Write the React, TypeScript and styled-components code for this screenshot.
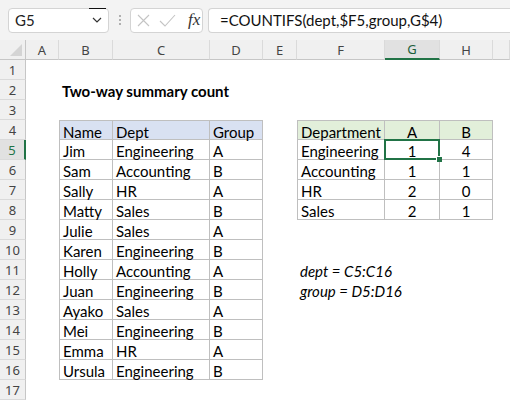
import styled, { createGlobalStyle, css } from "styled-components";

const GlobalStyle = createGlobalStyle`
    html, body {
        margin: 0;
        padding: 0;
        background: #ffffff;
    }
    body {
        width: 510px;
        height: 400px;
        overflow: hidden;
        font-family: "Noto Sans", "Open Sans", sans-serif;
    }
    * {
        box-sizing: border-box;
    }
`;

const Green = "#217346";
const TableLine = "#bfbfbf";

const Window = styled.div`
    width: 510px;
    height: 400px;
    overflow: hidden;
    display: flex;
    flex-direction: column;
    background: #ffffff;
`;

const FormulaBar = styled.div`
    height: 40px;
    flex: none;
    display: flex;
    align-items: center;
    padding-left: 8px;
    background: #f3f3f3;
    overflow: hidden;
`;

const Box = styled.div`
    height: 25px;
    display: flex;
    align-items: center;
    background: #ffffff;
    border: 1px solid #d4d4d4;
    border-radius: 4px;
    flex: none;
`;

const NameBox = styled(Box)`
    position: relative;
    width: 101px;
    padding: 0 6px 0 6px;
    justify-content: space-between;
    font-family: Lato, "Noto Sans", sans-serif;
    font-size: 15px;
    color: #222;

    &::before {
        content: "";
        position: absolute;
        top: -1px;
        right: 2px;
        width: 17px;
        height: 1px;
        background: #111;
    }
`;

const Dots = styled.div`
    width: 21px;
    flex: none;
    display: flex;
    flex-direction: column;
    align-items: center;
    gap: 2px;

    span {
        width: 2px;
        height: 2px;
        border-radius: 1px;
        background: #9a9a9a;
    }
`;

const FxBox = styled(Box)`
    width: 73px;
    padding-left: 6px;
    gap: 9px;
`;

const Fx = styled.span`
    margin-left: 3px;
    font-family: "Liberation Serif", serif;
    font-style: italic;
    font-size: 17px;
    color: #333;
`;

const FormulaBox = styled(Box)`
    margin-left: 5px;
    width: 320px;
    padding-left: 11px;
    border-right: none;
    border-radius: 4px 0 0 4px;
    font-family: Lato, "Noto Sans", sans-serif;
    font-size: 15px;
    color: #111;
    white-space: nowrap;
`;

const Sheet = styled.div`
    display: grid;
    grid-template-columns: 26px 33px 54px 97px 53px 34px 88px 55px 53px 1fr;
    grid-auto-rows: 20px;
    font-family: Lato, "Liberation Sans", sans-serif;
`;

const Corner = styled.div`
    background: #f0f0f0;
    border-right: 1px solid #c6c6c6;
    border-bottom: 1px solid #c6c6c6;
    display: flex;
    align-items: flex-end;
    justify-content: flex-end;
    padding: 0 3px 3px 0;
`;

const ColHead = styled.div<{ $active?: boolean }>`
    display: flex;
    align-items: center;
    justify-content: center;
    background: ${(p) => (p.$active ? "#e1e1e1" : "#f0f0f0")};
    border-right: 1px solid #dadada;
    border-bottom: ${(p) => (p.$active ? `2px solid ${Green}` : "1px solid #c6c6c6")};
    font-family: "Noto Sans", sans-serif;
    font-size: 13px;
    color: ${(p) => (p.$active ? "#1e5e3a" : "#444")};
`;

const RowHead = styled.div<{ $active?: boolean }>`
    display: flex;
    align-items: center;
    justify-content: center;
    background: ${(p) => (p.$active ? "#e1e1e1" : "#f0f0f0")};
    border-right: ${(p) => (p.$active ? `2px solid ${Green}` : "1px solid #c6c6c6")};
    border-bottom: 1px solid #dadada;
    font-family: "Noto Sans", sans-serif;
    font-size: 13px;
    color: ${(p) => (p.$active ? Green : "#444")};
`;

const Cell = styled.div<{
    $fill?: string;
    $table?: boolean;
    $top?: boolean;
    $left?: boolean;
    $center?: boolean;
    $bold?: boolean;
    $italic?: boolean;
}>`
    position: relative;
    padding: 2px 3px 0;
    font-size: 15px;
    line-height: 18px;
    color: #000;
    white-space: nowrap;
    text-align: ${(p) => (p.$center ? "center" : "left")};
    font-weight: ${(p) => (p.$bold ? 700 : 400)};
    font-style: ${(p) => (p.$italic ? "italic" : "normal")};
    background: ${(p) => p.$fill ?? "transparent"};
    ${(p) =>
        p.$table &&
        css`
            border-right: 1px solid ${TableLine};
            border-bottom: 1px solid ${TableLine};
        `}
    ${(p) => p.$top && css`border-top: 1px solid ${TableLine};`}
    ${(p) => p.$left && css`border-left: 1px solid ${TableLine};`}
`;

const Selection = styled.div`
    position: absolute;
    top: -1px;
    left: -1px;
    right: -1px;
    bottom: -1px;
    border: 2px solid ${Green};
    z-index: 2;
    pointer-events: none;
`;

const FillHandle = styled.div`
    position: absolute;
    right: -4px;
    bottom: -4px;
    width: 6px;
    height: 6px;
    background: ${Green};
    border-left: 1px solid #fff;
    border-top: 1px solid #fff;
`;

// the last column is cut by the window edge, so its letter is out of view
const columns = ["A", "B", "C", "D", "E", "F", "G", "H", "I"];
const visibleLetters = "ABCDEFGH";

const people = [
    ["Jim", "Engineering", "A"],
    ["Sam", "Accounting", "B"],
    ["Sally", "HR", "A"],
    ["Matty", "Sales", "B"],
    ["Julie", "Sales", "A"],
    ["Karen", "Engineering", "B"],
    ["Holly", "Accounting", "A"],
    ["Juan", "Engineering", "B"],
    ["Ayako", "Sales", "A"],
    ["Mei", "Engineering", "B"],
    ["Emma", "HR", "A"],
    ["Ursula", "Engineering", "B"],
];

const summary = [
    ["Engineering", "1", "4"],
    ["Accounting", "1", "1"],
    ["HR", "2", "0"],
    ["Sales", "2", "1"],
];

type CellSpec = {
    text?: string;
    fill?: string;
    table?: boolean;
    top?: boolean;
    left?: boolean;
    center?: boolean;
    bold?: boolean;
    italic?: boolean;
    selected?: boolean;
};

const specFor = (row: number, col: string): CellSpec => {
    if (row === 2 && col === "B") return { text: "Two-way summary count", bold: true };

    const a = "BCD".indexOf(col);
    if (row >= 4 && row <= 16 && a >= 0) {
        const text = row === 4 ? ["Name", "Dept", "Group"][a] : people[row - 5][a];
        return {
            text,
            table: true,
            fill: row === 4 ? "#d9e1f2" : undefined,
            top: row === 4,
            left: a === 0,
        };
    }

    const b = "FGH".indexOf(col);
    if (row >= 4 && row <= 8 && b >= 0) {
        const text = row === 4 ? ["Department", "A", "B"][b] : summary[row - 5][b];
        return {
            text,
            table: true,
            fill: row === 4 ? "#e2efda" : undefined,
            top: row === 4,
            left: b === 0,
            center: b > 0,
            selected: row === 5 && col === "G",
        };
    }

    if (row === 11 && col === "F") return { text: "dept = C5:C16", italic: true };
    if (row === 12 && col === "F") return { text: "group = D5:D16", italic: true };

    return {};
};

const rowNumbers = Array.from({ length: 17 }, (_, i) => i + 1);

export default function App() {
    return (
        <Window>
            <GlobalStyle />
            <FormulaBar>
                <NameBox>
                    <span>G5</span>
                    <svg width="10" height="6" viewBox="0 0 10 6">
                        <path d="M1 1 L5 5 L9 1" fill="none" stroke="#333" strokeWidth="1.2" />
                    </svg>
                </NameBox>
                <Dots>
                    <span />
                    <span />
                    <span />
                </Dots>
                <FxBox>
                    <svg width="13" height="13" viewBox="0 0 13 13">
                        <path d="M1 1 L12 12 M12 1 L1 12" stroke="#c4c4c4" strokeWidth="1.1" />
                    </svg>
                    <svg width="17" height="13" viewBox="0 0 17 13">
                        <path d="M1 7 L6 12 L16 1" fill="none" stroke="#c4c4c4" strokeWidth="1.1" />
                    </svg>
                    <Fx>fx</Fx>
                </FxBox>
                <FormulaBox>=COUNTIFS(dept,$F5,group,G$4)</FormulaBox>
            </FormulaBar>

            <Sheet>
                <Corner>
                    <svg width="12" height="12" viewBox="0 0 12 12">
                        <polygon points="12,0 12,12 0,12" fill="#d4d4d4" />
                    </svg>
                </Corner>
                {columns.map((c) => (
                    <ColHead key={c} $active={c === "G"}>
                        {visibleLetters.includes(c) ? c : ""}
                    </ColHead>
                ))}

                {rowNumbers.map((r) => [
                    <RowHead key={`h${r}`} $active={r === 5}>
                        {r}
                    </RowHead>,
                    ...columns.map((c) => {
                        const s = specFor(r, c);
                        return (
                            <Cell
                                key={`${c}${r}`}
                                $fill={s.fill}
                                $table={s.table}
                                $top={s.top}
                                $left={s.left}
                                $center={s.center}
                                $bold={s.bold}
                                $italic={s.italic}
                            >
                                {s.text}
                                {s.selected && (
                                    <Selection>
                                        <FillHandle />
                                    </Selection>
                                )}
                            </Cell>
                        );
                    }),
                ])}
            </Sheet>
        </Window>
    );
}
